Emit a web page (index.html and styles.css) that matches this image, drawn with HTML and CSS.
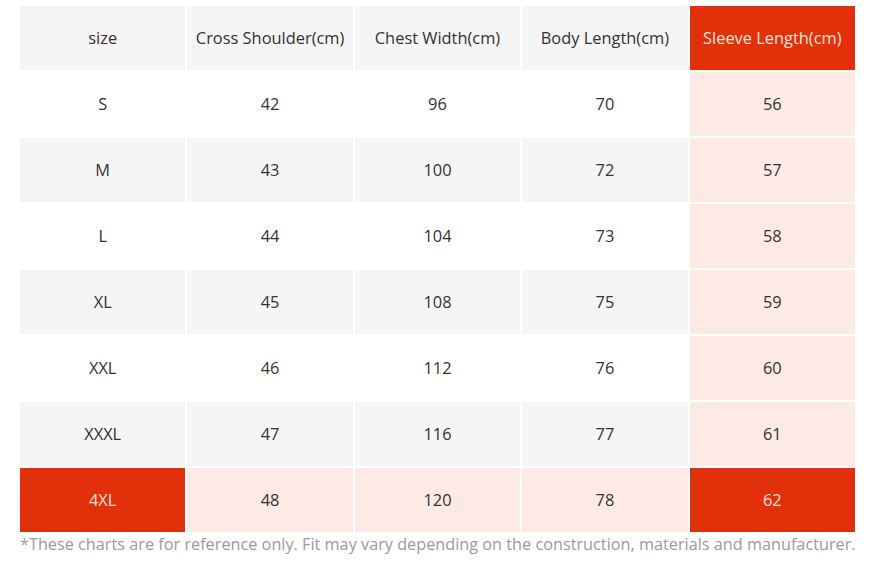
FILE: index.html
```html
<!DOCTYPE html>
<html>
<head>
<meta charset="utf-8">
<link rel="stylesheet" href="styles.css">
</head>
<body>
<div class="chart">
  <div class="grid">
    <div class="cell gray">size</div>
    <div class="cell gray">Cross Shoulder(cm)</div>
    <div class="cell gray">Chest Width(cm)</div>
    <div class="cell gray">Body Length(cm)</div>
    <div class="cell red">Sleeve Length(cm)</div>

    <div class="cell">S</div><div class="cell">42</div><div class="cell">96</div><div class="cell">70</div><div class="cell pink">56</div>
    <div class="cell gray">M</div><div class="cell gray">43</div><div class="cell gray">100</div><div class="cell gray">72</div><div class="cell pink">57</div>
    <div class="cell">L</div><div class="cell">44</div><div class="cell">104</div><div class="cell">73</div><div class="cell pink">58</div>
    <div class="cell gray">XL</div><div class="cell gray">45</div><div class="cell gray">108</div><div class="cell gray">75</div><div class="cell pink">59</div>
    <div class="cell">XXL</div><div class="cell">46</div><div class="cell">112</div><div class="cell">76</div><div class="cell pink">60</div>
    <div class="cell gray">XXXL</div><div class="cell gray">47</div><div class="cell gray">116</div><div class="cell gray">77</div><div class="cell pink">61</div>
    <div class="cell red">4XL</div><div class="cell pink">48</div><div class="cell pink">120</div><div class="cell pink">78</div><div class="cell red">62</div>
  </div>
  <p class="note">*These charts are for reference only. Fit may vary depending on the construction, materials and manufacturer.</p>
</div>
</body>
</html>
```

FILE: styles.css
```css
html, body {
  margin: 0;
  padding: 0;
  background: #ffffff;
}
body {
  font-family: "Open Sans", "Liberation Sans", sans-serif;
  color: #333333;
}
.chart {
  padding: 6px 0 0 20px;
  width: 835px;
}
.grid {
  display: grid;
  grid-template-columns: repeat(5, 1fr);
  grid-auto-rows: 64px;
  gap: 2px;
}
.cell {
  display: flex;
  align-items: center;
  justify-content: center;
  padding-bottom: 2px;
  box-sizing: border-box;
  font-size: 16.4px;
  background: #ffffff;
}
.gray { background: #f5f5f5; }
.pink { background: #fdeae5; }
.red { background: #e2300a; color: #fbe3d6; }
.note {
  margin: 0;
  padding-top: 1px;
  font-size: 16.25px;
  line-height: 22px;
  color: #9a9a9a;
  white-space: nowrap;
}
```
